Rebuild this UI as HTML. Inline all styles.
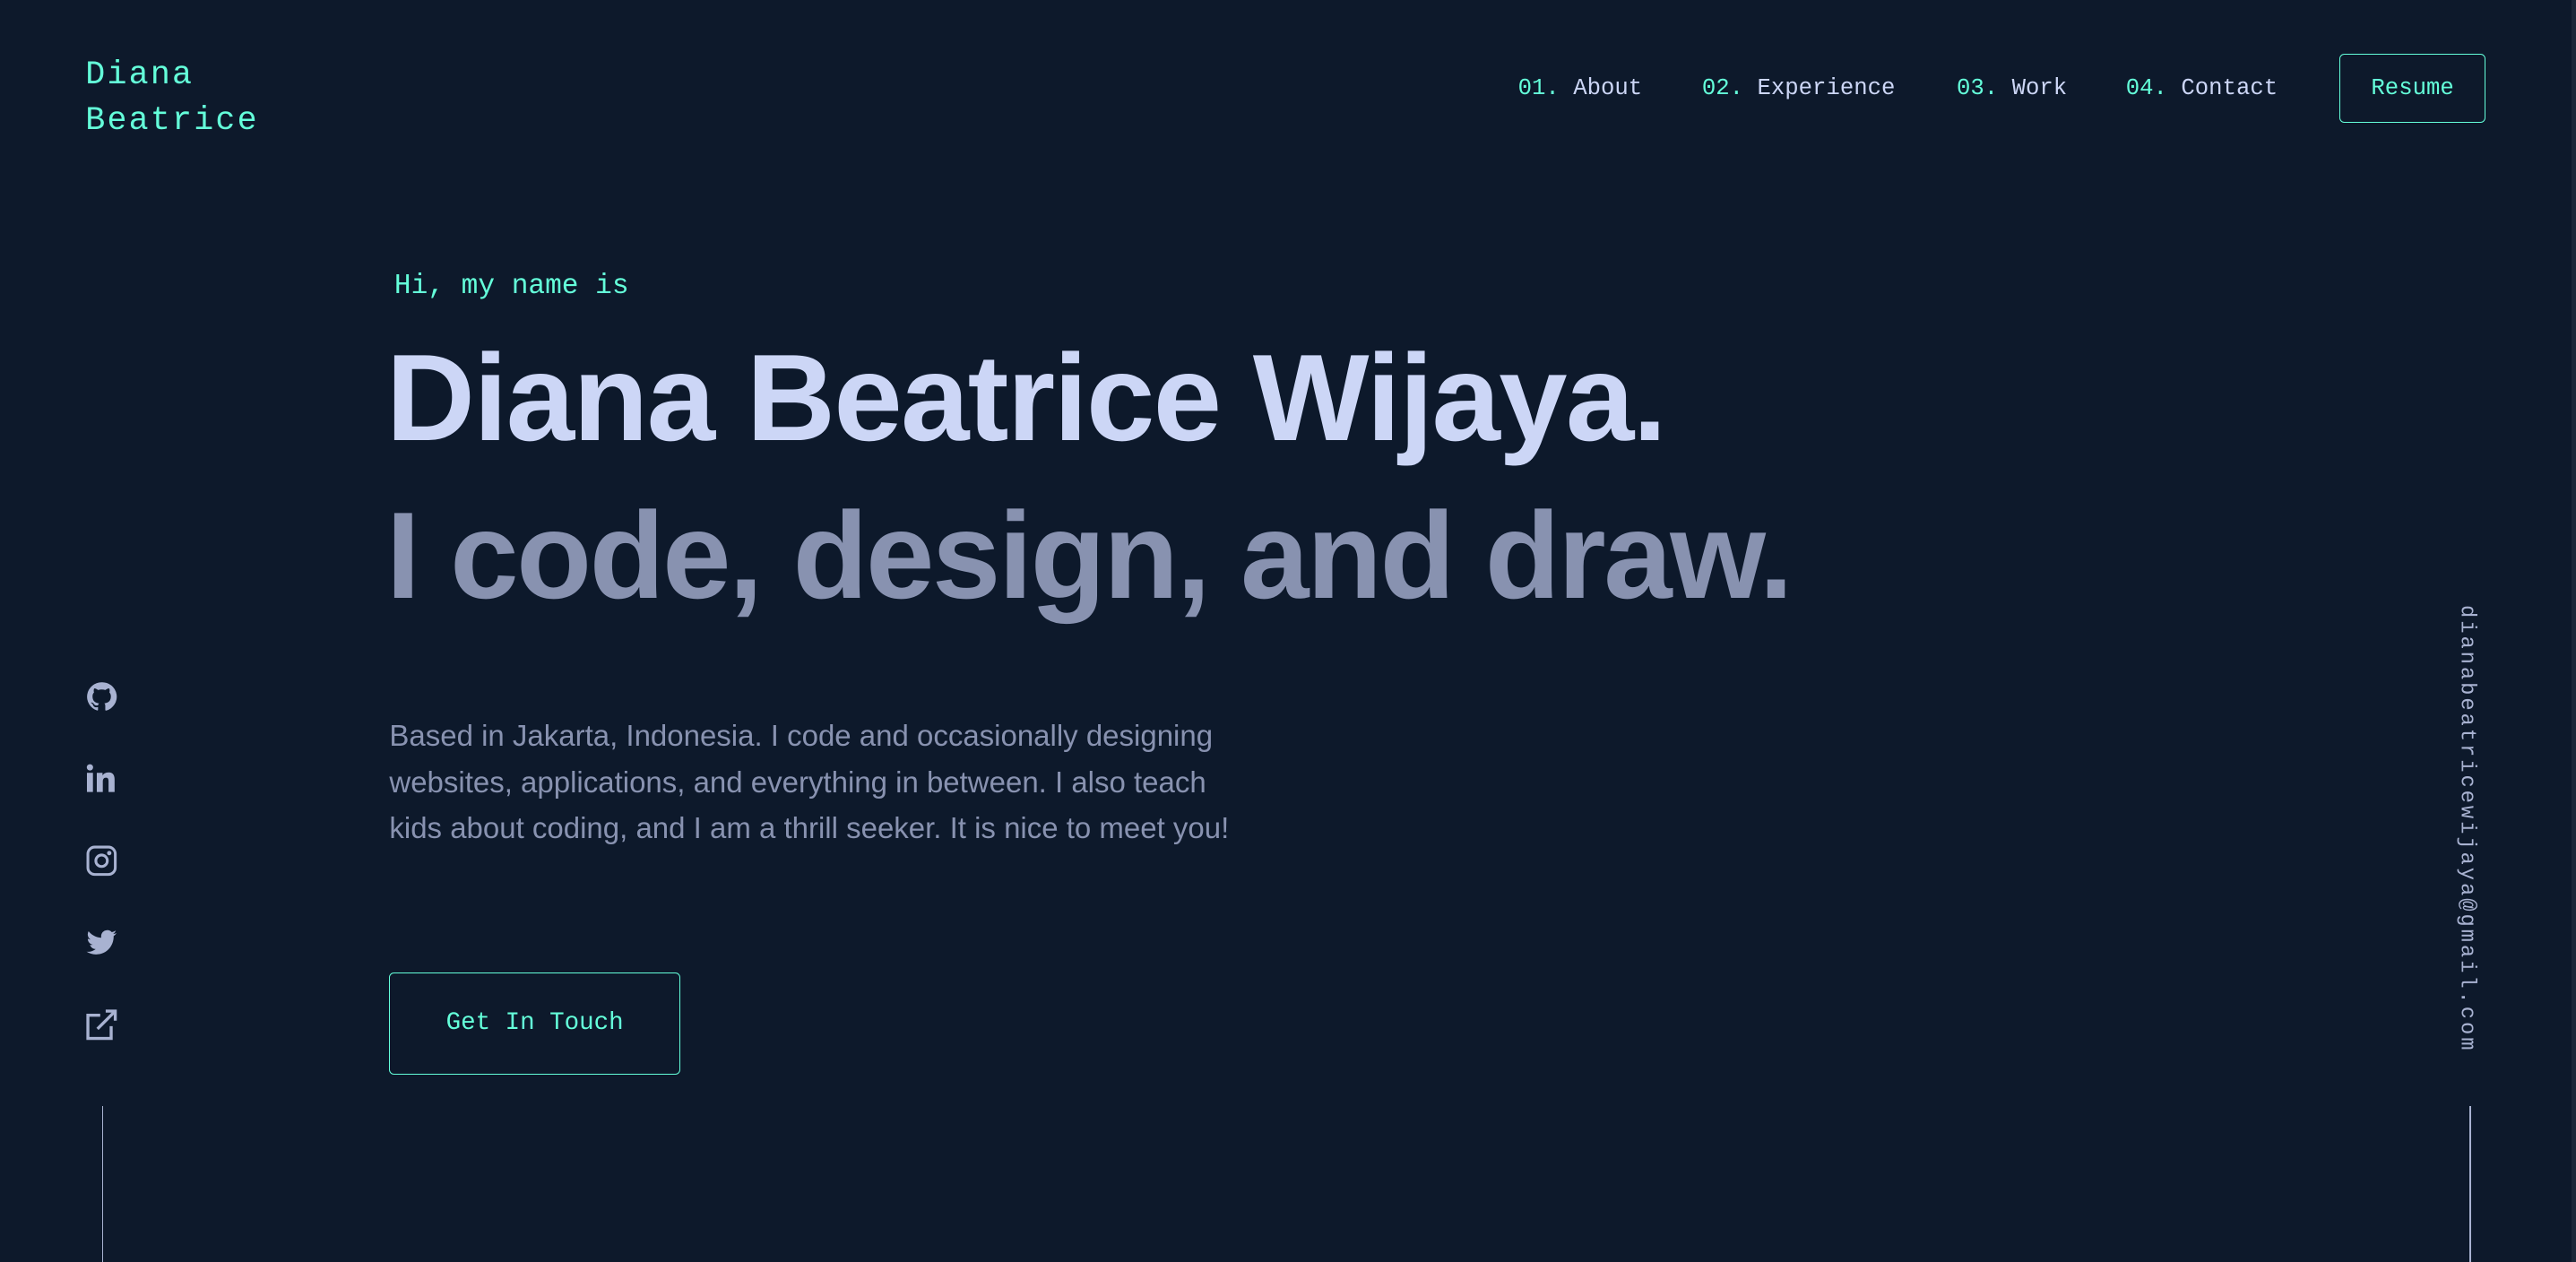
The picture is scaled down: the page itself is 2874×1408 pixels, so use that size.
<!DOCTYPE html>
<html><head><meta charset="utf-8"><style>
html,body{margin:0;padding:0;background:#0d192b;overflow:hidden;width:2874px;height:1408px}
#w{zoom:1.8329;width:1568px;height:768px;position:relative;font-family:"Liberation Sans",sans-serif}
.mono{font-family:"Liberation Mono",monospace}
.g{color:#64ffda}
.logo{position:absolute;left:52px;top:32px;font-size:20px;line-height:28px;color:#64ffda;letter-spacing:1.2px}
nav{position:absolute;top:46px;left:924px;font-size:14px;color:#ccd6f6;white-space:nowrap}
nav span{position:absolute;top:0}
.res{position:absolute;left:1424px;top:33px;width:89px;height:42px;border:1px solid #64ffda;border-radius:3px;color:#64ffda;font-size:14px;display:flex;align-items:center;justify-content:center;box-sizing:border-box}
.hi{position:absolute;left:240px;top:165px;font-size:17px;color:#64ffda}
h1,h2{position:absolute;left:235px;margin:0;font-weight:bold;font-size:75px;white-space:nowrap;line-height:1}
h1{top:205px;color:#ccd6f6;letter-spacing:-0.95px}
h2{top:301px;color:#8892b0;letter-spacing:-1.35px}
p{position:absolute;left:237px;top:434px;margin:0;width:528px;font-size:18px;line-height:28px;color:#8892b0}
.btn{position:absolute;left:237px;top:592px;width:177px;height:62px;border:1px solid #64ffda;border-radius:3px;box-sizing:border-box;color:#64ffda;font-size:15px;display:flex;align-items:center;justify-content:center}
.ic{position:absolute;left:52px;width:20px;height:20px}
.vl{position:absolute;width:1px;background:#a8b2d1;top:673px;height:95px}
.em{position:absolute;left:1494px;top:368px;writing-mode:vertical-rl;font-size:13px;letter-spacing:1.6px;color:#a8b2d1}
.sb{position:absolute;right:0;top:0;width:3px;height:768px;background:#1c2738}
</style></head><body><div id="w">
<div class="logo mono">Diana<br>Beatrice</div>
<nav class="mono"><span style="left:0"><span class="g" style="position:static">01.</span> About</span><span style="left:112px"><span class="g" style="position:static">02.</span> Experience</span><span style="left:267px"><span class="g" style="position:static">03.</span> Work</span><span style="left:370px"><span class="g" style="position:static">04.</span> Contact</span></nav>
<div class="res mono">Resume</div>
<div class="hi mono">Hi, my name is</div>
<h1>Diana Beatrice Wijaya.</h1>
<h2>I code, design, and draw.</h2>
<p>Based in Jakarta, Indonesia. I code and occasionally designing websites, applications, and everything in between. I also teach kids about coding, and I am a thrill seeker. It is nice to meet you!</p>
<div class="btn mono">Get In Touch</div>
<svg class="ic" style="top:414px" viewBox="0 0 24 24"><path fill="#a8b2d1" d="M12 1.5A10.5 10.5 0 0 0 8.7 22c.5.1.7-.2.7-.5v-1.9c-2.9.6-3.5-1.3-3.5-1.3-.5-1.2-1.2-1.5-1.2-1.5-1-.6.1-.6.1-.6 1 .1 1.6 1.1 1.6 1.1.9 1.6 2.5 1.1 3.1.9.1-.7.4-1.1.7-1.4-2.3-.3-4.8-1.2-4.8-5.2 0-1.1.4-2.1 1.1-2.8-.1-.3-.5-1.3.1-2.8 0 0 .9-.3 2.9 1.1a10 10 0 0 1 5.2 0c2-1.4 2.9-1.1 2.9-1.1.6 1.5.2 2.5.1 2.8.7.7 1.1 1.7 1.1 2.8 0 4-2.5 4.9-4.8 5.2.4.3.7 1 .7 1.9v2.9c0 .3.2.6.7.5A10.5 10.5 0 0 0 12 1.5z"/></svg>
<svg class="ic" style="top:464px" viewBox="0 0 24 24"><circle cx="3.5" cy="4" r="2.3" fill="#a8b2d1"/><rect x="1.3" y="8" width="4.4" height="14" fill="#a8b2d1"/><path fill="#a8b2d1" d="M8.5 8h4.2v2c.7-1.3 2.3-2.3 4.4-2.3 3.5 0 4.4 2.3 4.4 5.4V22h-4.4v-7.8c0-1.6-.4-2.7-1.9-2.7s-2.3 1.1-2.3 2.7V22H8.5z"/></svg>
<svg class="ic" style="top:514px" viewBox="0 0 24 24" fill="none" stroke="#a8b2d1" stroke-width="2"><rect x="2" y="2" width="20" height="20" rx="5"/><circle cx="12" cy="12" r="4.2"/><circle cx="17.6" cy="6.4" r=".6" fill="#a8b2d1"/></svg>
<svg class="ic" style="top:564px" viewBox="0 0 24 24"><path fill="#a8b2d1" d="M23 4.6c-.8.4-1.7.6-2.6.7.9-.6 1.6-1.4 2-2.5-.9.5-1.9.9-2.9 1.1A4.5 4.5 0 0 0 11.8 8 12.8 12.8 0 0 1 2.5 3.3a4.5 4.5 0 0 0 1.4 6c-.7 0-1.4-.2-2-.6 0 2.2 1.6 4 3.6 4.4-.7.2-1.4.2-2 .1.6 1.8 2.2 3.1 4.2 3.1A9 9 0 0 1 1 18.2 12.8 12.8 0 0 0 8 20.2c8.3 0 12.8-6.9 12.8-12.8v-.6c.9-.6 1.6-1.4 2.2-2.2z"/></svg>
<svg class="ic" style="top:614px" viewBox="0 0 24 24" fill="none" stroke="#a8b2d1" stroke-width="2.2"><path d="M11 5H2v17h17v-9"/><path d="M9 15L22 2M15 2h7v7"/></svg>
<div class="vl" style="left:62px"></div>
<div class="em mono">dianabeatricewijaya@gmail.com</div>
<div class="vl" style="left:1503px"></div>
<div class="sb"></div>
</div></body></html>
